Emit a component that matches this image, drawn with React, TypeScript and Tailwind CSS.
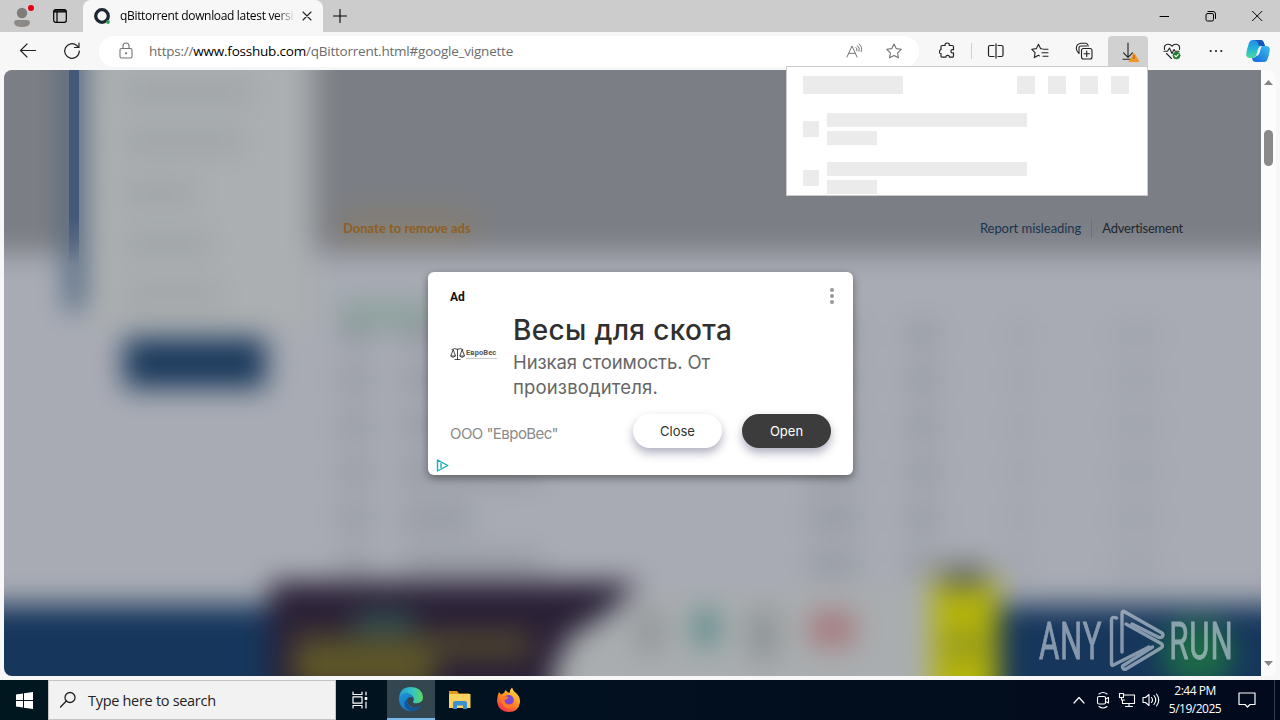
import React from "react";

type IconProps = { w?: number; h?: number; box?: string; className?: string; sw?: number; children: React.ReactNode };

function Icon({ w = 18, h = 18, box, className = "", sw = 1.1, children }: IconProps) {
  return (
    <svg width={w} height={h} viewBox={box ?? `0 0 ${w} ${h}`} fill="none" stroke="currentColor" strokeWidth={sw} strokeLinecap="round" strokeLinejoin="round" className={`shrink-0 ${className}`}>
      {children}
    </svg>
  );
}

function TabStrip() {
  return (
    <div className="flex h-8 bg-[#cccccc]">
      <div className="flex w-[83px] items-start pt-[2px]">
        <Icon w={24} h={28} className="ml-[12px]">
          <g stroke="none">
            <circle cx="10" cy="11" r="5.2" fill="#7f7b79" />
            <path d="M2 21q0-3 3-3h10q3 0 3 3q-1 4-8 4T2 21z" fill="#8d8986" />
            <circle cx="19" cy="6" r="3" fill="#e3000f" />
          </g>
        </Icon>
        <Icon w={16} h={16} className="ml-[16px] mt-[6px]" sw={1.2}>
          <rect x="1.700" y="1.700" width="12.600" height="12.600" rx="2" />
          <path d="M2 4h12M5 4v10" />
          <path d="M2.500 3h11" strokeWidth="1.6" />
        </Icon>
      </div>
      <div className="flex w-[240px] items-center rounded-t-lg bg-[#f7f7f7]">
        <Icon w={18} h={18} className="ml-[10px]">
          <circle cx="9" cy="9" r="6.300" stroke="#1d2733" strokeWidth="3.300" />
          <circle cx="15" cy="15" r="1.900" fill="#2fa35a" stroke="none" />
        </Icon>
        <div className="ml-[9px] w-[174px] overflow-hidden whitespace-nowrap bg-gradient-to-r from-black from-88% to-[#e8e8e8] bg-clip-text font-['Open_Sans',sans-serif] text-[12px] tracking-[-0.33px] text-transparent">
          qBittorrent download latest versi
        </div>
        <Icon w={10} h={10} className="ml-[8px]" sw={1.1}>
          <path d="M1 1l8 8M9 1l-8 8" stroke="#222" />
        </Icon>
      </div>
      <Icon w={14} h={14} className="ml-[10px] mt-[9px]" sw={1.1}>
        <path d="M7 .5v13M.5 7h13" />
      </Icon>
      <div className="ml-auto mr-[17px] flex items-center gap-[36px]">
        <Icon w={10} h={12} sw={1}><path d="M1 6.500h9" /></Icon>
        <Icon w={11} h={12} sw={1}>
          <rect x="1" y="3.500" width="7.500" height="7.500" rx="1.500" />
          <path d="M3 1.500h5q2.500 0 2.500 2.500v4.500" />
        </Icon>
        <Icon w={11} h={12} sw={1}><path d="M.5 1.300l9.400 9.400M9.900 1.300L.5 10.700" /></Icon>
      </div>
    </div>
  );
}

const STAR = "M8 1l2.200 4.600 5 .7-3.600 3.500.8 5L8 12.400 3.600 14.800l.8-5L.8 6.300l5-.7z";

function Toolbar() {
  return (
    <div className="flex h-[38px] items-center bg-[#f7f7f7] text-[#222]">
      <Icon className="ml-[19px]" w={18}><path d="M16.500 8.500H1.500M8 2L1.500 8.500 8 15" /></Icon>
      <Icon className="ml-[26px]" w={18} sw={1.200}>
        <path d="M16.300 9a7.300 7.300 0 1 1-2.500-5.500l1.700 1.700M16 1v4.500h-4.500" />
      </Icon>
      <div className="ml-[18px] flex h-[31px] w-[820px] items-center rounded-full bg-white">
        <Icon className="ml-[20px] text-[#747474]" w={14} h={18}>
          <rect x="1" y="6.500" width="12" height="9.500" rx="1.500" />
          <path d="M4 6.500V4a3 3 0 0 1 6 0v2.500" />
          <circle cx="7" cy="11.300" r=".6" fill="currentColor" />
        </Icon>
        <div className="ml-[16px] whitespace-nowrap font-['Open_Sans',sans-serif] text-[13.500px] tracking-[-0.22px] text-[#6c6c6c]">
          https://<span className="text-black">www.fosshub.com</span>/qBittorrent.html#google_vignette
        </div>
        <Icon className="ml-auto text-[#747474]" w={17} h={16}>
          <path d="M1 14L6 3l5 11M2.800 10.300h6.400M10 4.500q1.500 1.200.9 3.200M11.500 2.800q2.700 2 1.600 5.400M13 1q4 3 2.200 7.500" strokeWidth="1" />
        </Icon>
        <Icon className="ml-[22px] mr-[16px] text-[#747474]" w={18} box="-1 -1 18 18"><path d={STAR} /></Icon>
      </div>
      <Icon className="ml-[20px]" w={18} h={18}>
        <path d="M2 4.500q0-1 1-1h3.200q-.6-2.500 2-2.500t2 2.500h3q1.300 0 1.300 1.200v3q-2.500-.5-2.500 1.600t2.500 1.600v3q0 1.300-1.300 1.300h-2.800q.2-1.800-1.700-1.800t-1.800 1.800H3q-1 0-1-1v-2.700Q0 11.500.5 9.500T2 7.700z" strokeWidth="1.200" />
      </Icon>
      <span className="ml-[14px] h-[16px] w-px bg-[#cfcfcf]" />
      <Icon className="ml-[15px]" w={18} h={16} sw={1.200}><path d="M7 2.500H3q-1.500 0-1.500 1.500v8q0 1.500 1.500 1.500h4M11 2.500h3.500q1.500 0 1.500 1.500v8q0 1.500-1.500 1.500H11M9 .8v14.400" /></Icon>
      <Icon className="ml-[26px]" w={19} h={17}>
        <path d="M11 5.800l-1.500-.2L7.500 1.200 5.400 5.600.8 6.300l3.300 3.300-.8 5 4.200-2.300 1 .6M12 6.300h5M11 9.800h6M12 13.300h5" />
      </Icon>
      <Icon className="ml-[25px]" w={19} h={19}>
        <rect x="6.500" y="6.500" width="10.500" height="10.500" rx="2" />
        <path d="M11.750 9v5.500M9 11.750h5.500M4 11.500Q1.500 9.500 1.300 6.500 1.300 2 6 1.300h5q1.800.2 2.300 2.700M4 11.500V6q0-2 2-2h6" />
      </Icon>
      <div className="ml-[14px] flex h-[31px] w-[40px] justify-center rounded-t bg-[#d1d1d1]">
        <Icon w={24} h={30}>
          <path d="M12 7v14M7.500 16.800L12 21.300l4.500-4.500M7 23.300h9" />
          <path d="M18 17.500l4.800 8H13.200z" fill="#f0962a" stroke="#f0962a" />
          <path d="M18 19.500v3" stroke="#b05a10" strokeWidth="1" />
        </Icon>
      </div>
      <Icon className="ml-[15px]" w={19} h={19}>
        <path d="M1.500 7.500Q.8 3 4.500 2.300 7.500 2 9 4.300 10.500 2 13.500 2.300 17.200 3 16.500 7.500M1 9.300h3.500l2-3.300 2.500 5.500 2-4 1.200 1.800H16M3.500 11.500L8.500 16.500" />
        <circle cx="13.500" cy="13.500" r="3.600" fill="#1c7c2a" stroke="#1c7c2a" strokeWidth=".5" />
        <path d="M11.800 13.500l1.300 1.300 2.200-2.500" stroke="#fff" />
      </Icon>
      <Icon className="ml-[27px]" w={14} h={4}>
        <g fill="currentColor" stroke="none"><circle cx="1.700" cy="2" r="1.100" /><circle cx="7" cy="2" r="1.100" /><circle cx="12.300" cy="2" r="1.100" /></g>
      </Icon>
      <svg width="26" height="24" viewBox="0 0 26 24" className="ml-[22px]">
        <defs>
          <linearGradient id="cpA" x1="0" y1="0" x2="0" y2="1"><stop offset="0" stopColor="#2487e8" /><stop offset=".5" stopColor="#22b6d5" /><stop offset="1" stopColor="#4fdc9c" /></linearGradient>
          <linearGradient id="cpB" x1="1" y1="0" x2="0" y2="1"><stop offset="0" stopColor="#38c0ee" /><stop offset="1" stopColor="#1665d8" /></linearGradient>
        </defs>
        <path d="M8 1h8q2 0 2.800 2.500L20 7h-4q-2 0-3 3l-2 7q-.8 2-3 2H5q-4 0-3.800-4Q2 9 4 4 5 1 8 1z" fill="url(#cpA)" />
        <path d="M8 1h8q2 0 2.800 2.500L20 7h-4q-3 0-3-3-.5-3-5-3z" fill="#1656bb" />
        <path d="M18 7h3q4 0 3.800 4-.8 6-2.800 10.500-1 1.500-4 1.500h-7q-3 0-3.500-2L7 19h1.500q2.500-.5 3.200-3l2-6.500Q14.800 7 18 7z" fill="url(#cpB)" />
        <path d="M13.700 9.500Q14.500 7.500 16.500 7L14.500 14q-.7 3-4 3.800 1-.8 1.200-1.800z" fill="#f7f7f7" />
      </svg>
    </div>
  );
}

function Smudge({ className }: { className: string }) {
  return <span className={`block shrink-0 bg-[#858a92] ${className}`} />;
}

const TABLE_ROWS = [
  "w-[60px]", "w-[90px]", "w-[110px]", "w-[140px]", "w-[70px]", "w-[140px]",
];

function BlurredPage() {
  return (
    <div className="-m-12 grid h-[702px] w-[1353px] grid-cols-1 grid-rows-1 blur-[14px] *:[grid-area:1/1]">
      <div className="flex flex-col">
        <div className="h-[231px] bg-[#7b7e84]" />
        <div className="flex-1 bg-[#a8abb4]" />
        <div className="h-[119px] bg-[#16365c]" />
      </div>
      <div className="ml-[112px] flex w-[246px] flex-col">
        <div className="flex">
          <div className="h-[288px] w-[14px] bg-[#2c4a6e]" />
          <div className="flex h-[308px] flex-1 flex-col gap-[29px] bg-[#abafb1] pl-[42px] pt-[58px]">
            <span className="h-[22px] w-[126px] bg-[#9ea3a5]" />
            <span className="h-[22px] w-[118px] bg-[#9ea3a5]" />
            <span className="h-[22px] w-[72px] bg-[#9ea3a5]" />
            <span className="h-[22px] w-[88px] bg-[#9ea3a5]" />
            <span className="h-[22px] w-[98px] bg-[#a1a5a7]" />
          </div>
        </div>
        <div className="ml-[56px] mt-[8px] h-[50px] w-[142px] bg-[#1b3a5c]" />
      </div>
      <div className="ml-[384px] mt-[190px] flex flex-col">
        <span className="h-[30px] w-[136px] bg-[#847d72]" />
        <span className="mt-[60px] h-[26px] w-[92px] bg-[#8ba29c]" />
        <div className="-mt-[6px] flex flex-col gap-[22px]">
          {TABLE_ROWS.map((w, i) => (
            <div key={i} className="flex h-[24px] opacity-50">
              <Smudge className="w-[30px]" />
              <div className="ml-[32px] flex w-[406px]"><Smudge className={w} /></div>
              <Smudge className="w-[50px]" />
              <Smudge className="ml-[50px] w-[30px]" />
              <Smudge className="ml-[76px] w-[10px]" />
              <Smudge className="ml-[90px] w-[44px] opacity-50" />
            </div>
          ))}
        </div>
      </div>
      <div className="ml-[314px] mt-[560px] flex items-end">
        <div className="flex h-[142px] w-[370px] flex-col bg-[#2a2036] pl-[24px] pt-[30px] [clip-path:polygon(0_0,100%_0,93%_16%,81%_40%,77%_66%,77%_100%,0_100%)]">
          <span className="ml-[60px] h-[22px] w-[60px] bg-[#2f4f52]" />
          <span className="h-[22px] w-[236px] bg-[#544c2d]" />
          <span className="h-[30px] w-[140px] bg-[#625b26]" />
        </div>
        <div className="-ml-[88px] flex h-[142px] w-[380px] items-start gap-[34px] bg-[#a9adaf] pl-[86px] pt-[28px] [clip-path:polygon(22%_9%,100%_0,100%_100%,0_100%,0_66%,4%_40%)]">
          <span className="h-[44px] w-[24px] bg-[#909496]" />
          <span className="h-[36px] w-[20px] bg-[#4f8483]" />
          <span className="h-[50px] w-[26px] bg-[#8b9092]" />
          <span className="mt-[2px] h-[34px] w-[44px] bg-[#a6787d]" />
        </div>
        <div className="-ml-[4px] flex h-[146px] w-[70px] flex-col bg-[#b6b608]">
          <span className="-mt-[14px] ml-[14px] h-[26px] w-[44px] bg-[#666a60]" />
          <span className="ml-[16px] mt-[40px] h-[30px] w-[40px] bg-[#96981e]" />
        </div>
        <div className="mb-[38px] ml-[164px] h-[64px] w-[72px] self-end rounded-full bg-[#1d6a48]" />
      </div>
    </div>
  );
}

function Watermark() {
  return (
    <svg width="200" height="66" viewBox="1037 607 200 66" className="absolute bottom-[3px] right-[24px] opacity-60">
      <g fill="#d0d9e2" stroke="#d0d9e2" strokeWidth=".9" fontFamily="Roboto, sans-serif" fontSize="52">
        <text x="1039" y="659.500" textLength="104" transform="translate(1039 0) scale(.6 1) translate(-1039 0)">ANY</text>
        <text x="1170" y="659.500" textLength="106" transform="translate(1171 0) scale(.6 1) translate(-1173 0)">RUN</text>
      </g>
      <g fill="none" stroke="#d0d9e2" strokeWidth="3.400" strokeLinejoin="round" strokeLinecap="round">
        <path d="M1116.500 618q-5-2-5 2v44q0 2 2 1l35.500-18" />
        <path d="M1122 652v-38q0-4 3-2l37 21q2 2 0 4-2 1-4 0l-26-13" />
        <path d="M1126 624l35 19.500q3 2 0 4.500l-35 21q-4 1-3.500-3l30-19" />
      </g>
    </svg>
  );
}

function AdCard() {
  return (
    <div className="absolute left-[424px] top-[202px] flex h-[203px] w-[425px] flex-col rounded-[6px] bg-white px-[22px] font-['Inter',sans-serif] shadow-[0_3px_8px_rgba(0,0,0,0.4)]">
      <div className="flex h-[40px] items-start justify-between pt-[16px]">
        <span className="font-['Roboto',sans-serif] text-[12px] font-bold leading-[18px] text-[#111]">Ad</span>
        <Icon w={4} h={16} className="-mr-[3px]"><g fill="#969696" stroke="none"><circle cx="2" cy="2" r="2" /><circle cx="2" cy="8" r="2" /><circle cx="2" cy="14" r="2" /></g></Icon>
      </div>
      <div className="flex h-[88px]">
        <div className="mt-[33px] flex h-[18px] w-[63px] items-center text-[#333]">
          <Icon w={15} h={14} sw={0.9}>
            <path d="M2 2.500q3-2 5.500 0 2.500-2 5.500 0M7.500 2v10M5 12.500h5M3 3L.8 9h4.400zM12 3L9.800 9h4.400zM1 9.500q2 2 4 0M10 9.500q2 2 4 0" />
          </Icon>
          <div className="ml-[1px] flex flex-col">
            <span className="font-['Roboto',sans-serif] text-[7.500px] font-bold leading-[8px] tracking-[0.1px] text-[#555]">ЕвроВес</span>
            <span className="mt-px h-px w-[31px] bg-[#ccc]" />
          </div>
        </div>
        <div className="whitespace-nowrap">
          <div className="text-[28px] font-medium leading-[36px] tracking-[0.33px] text-[#303030]">Весы для скота</div>
          <div className="mt-[2px] text-[18.500px] leading-[25px] tracking-[-0.1px] text-[#666]">Низкая стоимость. От<br /><span className="tracking-[0.15px]">производителя.</span></div>
        </div>
      </div>
      <div className="mt-[14px] flex h-[34px] items-center">
        <span className="mt-[6px] w-[183px] whitespace-nowrap text-[15px] tracking-[-0.55px] text-[#8a8a8a]">ООО "ЕвроВес"</span>
        <span className="flex h-[34px] w-[89px] items-center justify-center rounded-full bg-white pt-px text-[13px] text-[#333] shadow-[0_5px_10px_rgba(60,60,100,0.4)]">Close</span>
        <span className="ml-[20px] flex h-[34px] w-[89px] items-center justify-center rounded-full bg-[#3c3c3c] pt-px text-[13px] text-white shadow-[0_5px_10px_rgba(60,60,100,0.4)]">Open</span>
      </div>
      <Icon w={13} h={13} className="-ml-[14px] mt-[11px] text-[#18acc4]" sw={1.400}><path d="M1.500 1v11L11.800 6.500zM5 4.500v4" /></Icon>
    </div>
  );
}

function SkeletonRow() {
  return (
    <div className="flex h-[49px] shrink-0 items-start">
      <span className="mt-[8px] h-[16px] w-[16px] bg-[#ebebeb]" />
      <div className="ml-[8px] flex flex-col gap-[4px]">
        <span className="h-[14px] w-[200px] bg-[#ebebeb]" />
        <span className="h-[14px] w-[50px] bg-[#ebebeb]" />
      </div>
    </div>
  );
}

function DownloadsPopup() {
  return (
    <div className="absolute left-[786px] top-[66px] flex h-[130px] w-[362px] flex-col overflow-hidden border border-[#cbcbcb] bg-white pl-[16px] pr-[18px] pt-[9px]">
      <div className="flex h-[37px] shrink-0 items-start">
        <span className="mr-auto h-[18px] w-[100px] bg-[#ebebeb]" />
        <div className="flex gap-[13.300px]">
          {[0, 1, 2, 3].map((i) => <span key={i} className="h-[18px] w-[18px] bg-[#ebebeb]" />)}
        </div>
      </div>
      <SkeletonRow />
      <SkeletonRow />
    </div>
  );
}

function Viewport() {
  return (
    <div className="flex h-[610px] bg-[#f7f7f7] px-1 pb-1">
      <div className="relative h-[606px] w-[1257px] overflow-hidden rounded-l-lg">
        <BlurredPage />
        <div className="absolute left-[65px] top-0 h-[196px] w-[10px] bg-gradient-to-b from-[#43597a] from-75% to-transparent" />
        <div className="absolute left-[339px] top-[149px] flex w-[840px] items-center whitespace-nowrap font-['Lato',sans-serif] text-[13px] leading-[19px]">
          <span className="mr-auto font-bold text-[#8e5f22]">Donate to remove ads</span>
          <span className="border-r border-[#6d7178] pr-[10px] tracking-[-0.05px] text-[#1a3450]">Report misleading</span>
          <span className="pl-[10px] tracking-[-0.23px] text-[#22272e]">Advertisement</span>
        </div>
        <Watermark />
        <AdCard />
      </div>
      <div className="flex w-[15px] flex-col items-center rounded-r-lg bg-[#fcfcfc]">
        <Icon w={9} h={5} className="mt-[10px]"><path d="M0 5L4.500 0 9 5z" fill="#858585" stroke="none" /></Icon>
        <div className="mt-[45px] h-[36px] w-[9px] rounded-full bg-[#8a8a8a]" />
        <Icon w={9} h={5} className="mb-[10px] mt-auto"><path d="M0 0L4.500 5 9 0z" fill="#858585" stroke="none" /></Icon>
      </div>
    </div>
  );
}

function Taskbar() {
  return (
    <div className="flex h-[40px] items-center bg-gradient-to-r from-[#011720] via-[#02101f] to-[#020a1d] text-white">
      <div className="flex w-[48px] justify-center">
        <svg width="17" height="17" viewBox="0 0 17 17" fill="#fff"><path d="M0 2.500L7 1.500V8H0zM8 1.300L17 0v8H8zM0 9h7v6.500l-7-1zM8 9h9v8l-9-1.300z" /></svg>
      </div>
      <div className="flex h-[40px] w-[288px] items-center border border-[#c2c5c6] bg-[#f2f2f2] text-[#222]">
        <Icon w={18} h={18} className="ml-[10px]" sw={1.300}><circle cx="11" cy="6.500" r="5" /><path d="M7.300 10L1.500 16" /></Icon>
        <span className="ml-[11px] mt-px whitespace-nowrap font-['Open_Sans',sans-serif] text-[14.500px] tracking-[-0.3px]">Type here to search</span>
      </div>
      <Icon w={18} h={18} className="ml-[15px]" sw={1.200}>
        <path d="M2 1v2.500h9V1M2 17v-2.500h9V17M2 5.800h9v6.400H2zM15 1v3M15 11v6" />
        <path d="M15 6v3" strokeWidth="2.500" strokeLinecap="butt" />
      </Icon>
      <div className="ml-[18px] flex h-[40px] w-[48px] items-center justify-center border-b-2 border-[#76b9ed] bg-[#344750]">
        <svg width="26" height="26" viewBox="0 0 26 26">
          <defs>
            <linearGradient id="edA" x1="0" y1=".3" x2="1" y2=".3"><stop offset="0" stopColor="#249cd9" /><stop offset=".6" stopColor="#35c6c0" /><stop offset="1" stopColor="#62d75a" /></linearGradient>
            <linearGradient id="edB" x1="0" y1="0" x2="1" y2="1"><stop offset="0" stopColor="#1b95dd" /><stop offset="1" stopColor="#1366b0" /></linearGradient>
          </defs>
          <path d="M1 12Q2 1 13 1q11 .5 12 10 0 6-6.500 6.300-3.500 0-3.500-1.500 1.500-2 .5-4.300Q13.500 8 9 7.500 3.500 7.600 1 12z" fill="url(#edA)" />
          <path d="M1 12q2.500-5 8-4.500 5 .5 6 4Q10 9.500 9 14q0 5 5 7.500 5 1.500 9-2-3.500 6-11 5.500Q1 23.500 1 12z" fill="url(#edB)" />
          <path d="M9.500 12.500Q8 18 13 21.500q5 2 10-2-3 6-10 5.500-7-2.500-6.500-8 .8-3 3-4.500z" fill="#12569c" />
        </svg>
      </div>
      <svg width="24" height="22" viewBox="0 0 24 22" className="ml-[13px]">
        <path d="M1 2h8l2 2.500h10V8H1z" fill="#e09a1c" />
        <path d="M1 5h21.500V19H1z" fill="#fbd361" />
        <path d="M5 20v-6q0-2 2-2h10q2 0 2 2v6h-4v-3.500H9V20z" fill="#3b90cd" />
      </svg>
      <svg width="25" height="26" viewBox="0 0 25 26" className="ml-[24px]">
        <defs>
          <linearGradient id="ffA" x1=".8" y1="0" x2=".2" y2="1"><stop offset="0" stopColor="#ffe33e" /><stop offset=".5" stopColor="#ff8c26" /><stop offset="1" stopColor="#f0284e" /></linearGradient>
        </defs>
        <path d="M3 5l2 2.500Q7 6 8 6l1.500-3q1 2 4 3 0-3 2.500-5.500Q17 4 20 6q4.500 4 4 9.500Q22.500 25 12.500 25T1 14.500Q1 9 3 5z" fill="url(#ffA)" />
        <circle cx="12.800" cy="13" r="5" fill="#7d45d3" />
        <path d="M6 9.500q4-1.500 6.500 1-1 2-4 2.500 0 3.500 4 4.500 4 0 6-3 0 6-6 7Q5 20.500 6 9.500z" fill="#ff7a26" />
      </svg>
      <div className="ml-auto flex h-full items-center">
        <Icon w={12} h={8} sw={1.200}><path d="M1 7l5-5.500L11 7" /></Icon>
        <Icon w={14} h={18} className="ml-[11px]" sw={1.100}>
          <rect x="1.500" y="5.500" width="8" height="7.500" rx="1.500" /><path d="M9.500 8l3-1.500v5.500l-3-1.500M3 3q4-3 8 0M3 15.500q4 3 8 0" />
        </Icon>
        <Icon w={18} h={16} className="ml-[8px]" sw={1.100}><path d="M5.500 3h11v8.500h-12V8M11 11.500V14M7.500 14.500h7M1.500 1.500h4v4h-4zM3.500 5.500v2.500h3" /></Icon>
        <Icon w={18} h={16} className="ml-[6px]" sw={1.100}><path d="M1 5.500h2.500L7 2.500v11l-3.500-3H1zM9.500 5.500q2 2.500 0 5M12 3.500q3.500 4.500 0 9M14.500 2q4.500 6 0 12" /></Icon>
        <div className="ml-[5px] flex w-[60px] flex-col items-center whitespace-nowrap font-['Open_Sans',sans-serif] text-[12px] leading-[18px] tracking-[-0.5px]">
          <span>2:44 PM</span>
          <span>5/19/2025</span>
        </div>
        <Icon w={18} h={18} className="ml-[13px]" sw={1.200}><path d="M1 2h16v11.500h-5L9.500 16 7 13.500H1z" /></Icon>
        <span className="ml-[18px] mr-[5px] h-full w-px bg-[#35404e]" />
      </div>
    </div>
  );
}

export default function App() {
  return (
    <div className="relative h-[720px] w-[1280px] overflow-hidden bg-[#f7f7f7]">
      <TabStrip />
      <Toolbar />
      <Viewport />
      <Taskbar />
      <DownloadsPopup />
    </div>
  );
}
